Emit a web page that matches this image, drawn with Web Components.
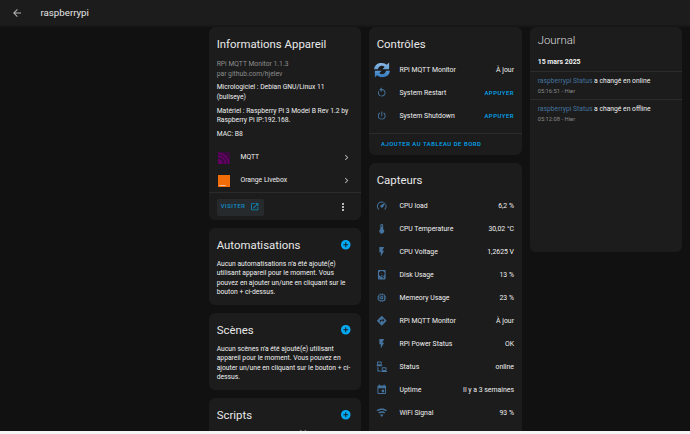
<!DOCTYPE html>
<html lang="fr"><head><meta charset="utf-8"><title>raspberrypi</title>
<style>
html,body{margin:0;height:100%;overflow:hidden;background:#f4f4f4;color:#f0f0f0;font-family:Roboto,"Liberation Sans",sans-serif}
</style></head><body>
<ha-topbar>raspberrypi</ha-topbar>
<ha-layout>
 <ha-column>
  <ha-card heading="Informations Appareil" style="height:193px">
   <ha-device-info></ha-device-info>
  </ha-card>
  <ha-card heading="Automatisations" add style="height:77px"><ha-note>Aucun automatisations n'a été ajouté(e) utilisant appareil pour le moment. Vous pouvez en ajouter un/une en cliquant sur le bouton + ci-dessus.</ha-note></ha-card>
  <ha-card heading="Scènes" add style="height:77px"><ha-note>Aucun scènes n'a été ajouté(e) utilisant appareil pour le moment. Vous pouvez en ajouter un/une en cliquant sur le bouton + ci-dessus.</ha-note></ha-card>
  <ha-card heading="Scripts" add><ha-note>Aucun scripts n'a été ajouté(e) utilisant appareil pour le moment.</ha-note></ha-card>
 </ha-column>
 <ha-column>
  <ha-card heading="Contrôles" style="height:128px">
   <ha-row icon="sync" label="RPi MQTT Monitor" value="À jour"></ha-row>
   <ha-row icon="restart" label="System Restart" action="APPUYER"></ha-row>
   <ha-row icon="power" label="System Shutdown" action="APPUYER"></ha-row>
   <ha-addbar>AJOUTER AU TABLEAU DE BORD</ha-addbar>
  </ha-card>
  <ha-card heading="Capteurs" style="height:285px">
   <ha-row icon="speed" label="CPU load" value="6,2 %"></ha-row>
   <ha-row icon="thermo" label="CPU Temperature" value="30,02 °C"></ha-row>
   <ha-row icon="flash" label="CPU Voltage" value="1,2625 V"></ha-row>
   <ha-row icon="disk" label="Disk Usage" value="13 %"></ha-row>
   <ha-row icon="memory" label="Memeory Usage" value="23 %"></ha-row>
   <ha-row icon="dir" label="RPi MQTT Monitor" value="À jour"></ha-row>
   <ha-row icon="flash" label="RPi Power Status" value="OK"></ha-row>
   <ha-row icon="lan" label="Status" value="online"></ha-row>
   <ha-row icon="cal" label="Uptime" value="Il y a 3 semaines"></ha-row>
   <ha-row icon="wifi" label="WiFi Signal" value="93 %"></ha-row>
  </ha-card>
 </ha-column>
 <ha-column>
  <ha-card heading="Journal" light style="height:225px">
   <ha-log date="15 mars 2025"></ha-log>
   <ha-log-entry state="online" time="05:16:51 - Hier"></ha-log-entry>
   <ha-log-entry state="offline" time="05:12:08 - Hier"></ha-log-entry>
  </ha-card>
 </ha-column>
</ha-layout>
<script>
const P={
restart:'M12,4C14.1,4 16.1,4.8 17.6,6.3C20.7,9.4 20.7,14.5 17.6,17.6C15.8,19.5 13.3,20.2 10.9,19.9L11.4,17.9C13.1,18.1 14.9,17.5 16.2,16.2C18.5,13.9 18.5,10.1 16.2,7.7C15.1,6.6 13.5,6 12,6V10.6L7,5.6L12,0.6V4M6.3,17.6C3.7,15 3.3,11 5.1,7.9L6.6,9.4C5.5,11.6 5.9,14.4 7.8,16.2C8.3,16.7 8.9,17.1 9.6,17.4L9,19.4C8,19 7.1,18.4 6.3,17.6Z',
power:'M16.56,5.44L15.11,6.89C16.84,7.94 18,9.83 18,12A6,6 0 0,1 12,18A6,6 0 0,1 6,12C6,9.83 7.16,7.94 8.88,6.88L7.44,5.44C5.36,6.88 4,9.28 4,12A8,8 0 0,0 12,20A8,8 0 0,0 20,12C20,9.28 18.64,6.88 16.56,5.44M13,3H11V13H13',
speed:'M12,16A3,3 0 0,1 9,13C9,11.88 9.61,10.9 10.5,10.39L20.21,4.77L14.68,14.35C14.18,15.33 13.17,16 12,16M12,3C13.81,3 15.5,3.5 16.97,4.32L14.87,5.53C14,5.19 13,5 12,5A8,8 0 0,0 4,13C4,15.21 4.89,17.21 6.34,18.65H6.35C6.74,19.04 6.74,19.67 6.35,20.06C5.96,20.45 5.32,20.45 4.93,20.07C3.12,18.26 2,15.76 2,13A10,10 0 0,1 12,3M22,13C22,15.76 20.88,18.26 19.07,20.07C18.68,20.45 18.05,20.45 17.66,20.06C17.27,19.67 17.27,19.04 17.66,18.65C19.11,17.2 20,15.21 20,13C20,12 19.81,11 19.46,10.1L20.67,8C21.5,9.5 22,11.18 22,13Z',
thermo:'M15 13V5A3 3 0 0 0 9 5V13A5 5 0 1 0 15 13M12 4A1 1 0 0 1 13 5V8H11V5A1 1 0 0 1 12 4Z',
flash:'M7,2V13H10V22L17,10H13L17,2H7Z',
disk:'M6,2H18A2,2 0 0,1 20,4V20A2,2 0 0,1 18,22H6A2,2 0 0,1 4,20V4A2,2 0 0,1 6,2M12,4A6,6 0 0,0 6,10C6,13.31 8.69,16 12.1,16L11.22,13.77C10.95,13.29 11.11,12.68 11.59,12.4L12.45,11.9C12.93,11.63 13.54,11.79 13.82,12.27L15.74,14.69C17.12,13.59 18,11.9 18,10A6,6 0 0,0 12,4M12,9A1,1 0 0,1 13,10A1,1 0 0,1 12,11A1,1 0 0,1 11,10A1,1 0 0,1 12,9M7,18A1,1 0 0,0 6,19A1,1 0 0,0 7,20A1,1 0 0,0 8,19A1,1 0 0,0 7,18M12.09,13.27L14.58,19.58L17.17,18.08L12.95,12.77L12.09,13.27Z',
memory:'M17,17H7V7H17M21,11V9H19V7C19,5.89 18.1,5 17,5H15V3H13V5H11V3H9V5H7C5.89,5 5,5.89 5,7V9H3V11H5V13H3V15H5V17A2,2 0 0,0 7,19H9V21H11V19H13V21H15V19H17A2,2 0 0,0 19,17V15H21V13H19V11M13,13H11V11H13M15,9H9V15H15V9Z',
dir:'M14,14.5V12H10V15H8V11A1,1 0 0,1 9,10H14V7.5L17.5,11M21.71,11.29L12.71,2.29H12.7C12.31,1.9 11.68,1.9 11.29,2.29L2.29,11.29C1.9,11.68 1.9,12.32 2.29,12.71L11.29,21.71C11.68,22.09 12.31,22.1 12.71,21.71L21.71,12.71C22.1,12.32 22.1,11.68 21.71,11.29Z',
lan:'M4,1C2.89,1 2,1.89 2,3V7C2,8.11 2.89,9 4,9H1V11H13V9H10C11.11,9 12,8.11 12,7V3C12,1.89 11.11,1 10,1H4M4,3H10V7H4V3M3,13V22H10V20H5V13H3M14,13C12.89,13 12,13.89 12,15V19C12,20.11 12.89,21 14,21H11V23H23V21H20C21.11,21 22,20.11 22,19V15C22,13.89 21.11,13 20,13H14M14,15H20V19H14V15Z',
cal:'M19,3H18V1H16V3H8V1H6V3H5C3.89,3 3,3.89 3,5V19A2,2 0 0,0 5,21H19A2,2 0 0,0 21,19V5A2,2 0 0,0 19,3M19,19H5V9H19V19M12,12H17V17H12V12Z',
wifi:'M12,21L15.6,16.2C14.6,15.45 13.35,15 12,15C10.65,15 9.4,15.45 8.4,16.2L12,21M12,3C7.95,3 4.21,4.34 1.2,6.6L3,9C5.5,7.12 8.62,6 12,6C15.38,6 18.5,7.12 21,9L22.8,6.6C19.79,4.34 16.05,3 12,3M12,9C9.3,9 6.81,9.89 4.8,11.4L6.6,13.8C8.1,12.67 9.97,12 12,12C14.03,12 15.9,12.67 17.4,13.8L19.2,11.4C17.19,9.89 14.7,9 12,9Z',
back:'M20,11V13H8L13.5,18.5L12.08,19.92L4.16,12L12.08,4.08L13.5,5.5L8,11H20Z',
chev:'M8.59,16.58L13.17,12L8.59,7.41L10,6L16,12L10,18L8.59,16.58Z',
plus:'M17,13H13V17H11V13H7V11H11V7H13V11H17M12,2A10,10 0 0,0 2,12A10,10 0 0,0 12,22A10,10 0 0,0 22,12A10,10 0 0,0 12,2Z',
open:'M14,3V5H17.59L7.76,14.83L9.17,16.24L19,6.41V10H21V3M19,19H5V5H12V3H5C3.89,3 3,3.9 3,5V19A2,2 0 0,0 5,21H19A2,2 0 0,0 21,19V12H19V19Z',
dots:'M12,16A2,2 0 0,1 14,18A2,2 0 0,1 12,20A2,2 0 0,1 10,18A2,2 0 0,1 12,16M12,10A2,2 0 0,1 14,12A2,2 0 0,1 12,14A2,2 0 0,1 10,12A2,2 0 0,1 12,10M12,4A2,2 0 0,1 14,6A2,2 0 0,1 12,8A2,2 0 0,1 10,6A2,2 0 0,1 12,4Z'
};
const ico=(n,s,c)=>`<svg width="${s}" height="${s}" viewBox="0 0 24 24" fill="${c}" style="display:block;flex:none"><path d="${P[n]}"/></svg>`;
const syncIcon=`<svg width="18" height="18" viewBox="0 0 24 24" style="display:block;flex:none"><defs><linearGradient id="g" x1="0" y1="0" x2="0" y2="1"><stop offset="0" stop-color="#8fbce6"/><stop offset="1" stop-color="#2f78bd"/></linearGradient></defs><path fill="url(#g)" d="M1.5 11C2 5 6.5 2.5 11.5 2.5c3 0 5.4 1 7 2.6L21.5 2v9h-9l3-3C14.6 7 13.4 6.4 11.7 6.4c-2.6 0-4.6 1.8-5 4.6zM22.5 13c-.5 6-5 8.5-10 8.5-3 0-5.4-1-7-2.6L2.5 22v-9h9l-3 3c.9 1 2.1 1.6 3.8 1.6 2.6 0 4.6-1.8 5-4.6z"/></svg>`;
function def(name,css,html){
 customElements.define(name,class extends HTMLElement{
  connectedCallback(){
   if(this.shadowRoot)return;
   const r=this.attachShadow({mode:'open'});
   r.innerHTML=`<style>${css}</style>`+(typeof html==='function'?html(this):html);
  }
 });
}
def('ha-topbar',`:host{display:flex;align-items:center;box-sizing:border-box;height:27px;background:#1c1c1c;border-bottom:2px solid #171717;padding-left:11px;color:#e6e6e6}
 .t{font-size:9.7px;margin-left:17.5px;line-height:12px}`,
 `${ico('back',12,'#b5b5b5')}<span class="t"><slot></slot></span>`);
def('ha-layout',`:host{display:grid;grid-template-columns:152px 153px 152px;column-gap:8px;justify-content:start;padding-left:209px;height:404px;overflow:hidden;align-items:start;background:#111}`,`<slot></slot>`);
def('ha-column',`:host{display:flex;flex-direction:column;gap:8px;min-width:0}`,`<slot></slot>`);
def('ha-card',`:host{display:block;box-sizing:border-box;background:#1c1c1c;border-radius:6px;overflow:hidden;flex:none}
 .h{display:flex;justify-content:space-between;align-items:center;padding:9px 10px 0 7.7px;height:16px;font-size:11.4px;line-height:16px;color:#e8e8e8}
 .body{padding-top:6.5px}
 :host([light]) .h{font-weight:300;color:#dcdcdc;padding-top:5px}
 :host([light]) .body{padding-top:4.5px}`,
 h=>`<div class="h"><span>${h.getAttribute('heading')}</span>${h.hasAttribute('add')?ico('plus',11.5,'#03a9f4'):''}</div><div class="body"><slot></slot></div>`);
def('ha-note',`:host{display:block;font-size:6.75px;line-height:9.6px;padding:0 7.7px;color:#f0f0f0}`,`<slot></slot>`);
def('ha-row',`:host{display:flex;align-items:center;height:23px;padding:0 8px 0 4px;font-size:6.9px;color:#f0f0f0}
 .i{width:18px;display:flex;justify-content:center;margin-right:8.5px}
 .l{flex:1;white-space:nowrap}
 .a{color:#03a9f4;font-size:5.9px;font-weight:500;letter-spacing:.52px}`,
 h=>{const n=h.getAttribute('icon');const a=h.getAttribute('action');
  return `<span class="i">${n==='sync'?syncIcon:ico(n,11.5,'#44739e')}</span><span class="l">${h.getAttribute('label')}</span>`+
  (a?`<span class="a">${a}</span>`:`<span>${h.getAttribute('value')}</span>`);});
def('ha-addbar',`:host{display:block;border-top:1px solid #2b2b2b;margin-top:5px;padding:6px 12px;font-size:5.9px;line-height:9px;font-weight:500;letter-spacing:.52px;color:#03a9f4}`,`<slot></slot>`);
def('ha-log',`:host{display:block;padding:3.5px 7.7px 0;height:15px;font-size:6.9px;line-height:12px;font-weight:700;color:#f0f0f0;border-bottom:1px solid #2b2b2b}`,h=>h.getAttribute('date'));
def('ha-log-entry',`:host{display:block;border-bottom:1px solid #2b2b2b;padding:3.5px 7.7px 0;height:23.5px;font-size:6.75px;line-height:10px;color:#f0f0f0}
 :host(:last-of-type){border-bottom:none}
 b{font-weight:400;color:#44739e}
 div{font-size:5.8px;color:#8a8a8a;line-height:10px}`,
 h=>`<b>raspberrypi Status</b> a changé en ${h.getAttribute('state')}<div>${h.getAttribute('time')}</div>`);
def('ha-device-row',`:host{display:flex;align-items:center;height:23px;padding:0 9px 0 9px;font-size:6.8px;color:#f0f0f0}
 .l{flex:1;margin-left:10.5px}`,
 h=>`<slot name="logo"></slot><span class="l">${h.getAttribute('label')}</span>${ico('chev',11,'#b0b0b0')}`);
def('ha-mqtt-logo',`:host{display:block;width:12px;height:12px;flex:none}`,`<svg width="12" height="12" viewBox="0 0 12 12" style="display:block"><rect width="12" height="12" fill="#3a0a3e"/><g fill="none" stroke="#660066" stroke-width="1.6"><path d="M0 1.2A10.8 10.8 0 0 1 10.8 12"/><path d="M0 4.4A7.6 7.6 0 0 1 7.6 12"/></g><path d="M0 7A5 5 0 0 1 5 12H0Z" fill="#660066"/></svg>`);
def('ha-orange-logo',`:host{display:flex;align-items:flex-end;box-sizing:border-box;width:12px;height:12px;flex:none;background:#f26c07;font:700 2px/2px Roboto,sans-serif;color:#fff;padding:0 0 .5px 1.5px}`,`orange`);
def('ha-device-info',`:host{display:block;font-size:6.75px;line-height:9.75px;color:#f0f0f0}
 .p{padding:0 7.7px;display:block}
 .g{color:#8c8c8c;margin:1.5px 0 3.75px}
 .m{margin-bottom:3.75px}
 .foot{margin-top:0;border-top:1px solid #2b2b2b;display:flex;justify-content:space-between;align-items:center;padding:5.5px 12px 5.5px 7.7px;height:17px}
 .btn{display:flex;align-items:center;gap:4.5px;background:#272a2c;border-radius:2px;height:17px;padding:0 4px;color:#0d8fc8;font-size:5.9px;font-weight:500;letter-spacing:.52px}`,
 `<div class="p g">RPi MQTT Monitor 1.1.3<br>par github.com/hjelev</div>
 <div class="p m">Micrologiciel : Debian GNU/Linux 11 (bullseye)</div>
 <div class="p m">Matériel : Raspberry Pi 3 Model B Rev 1.2 by Raspberry Pi IP:192.168.</div>
 <div class="p m" style="margin-bottom:6.5px">MAC: B8</div>
 <ha-device-row label="MQTT"><ha-mqtt-logo slot="logo"></ha-mqtt-logo></ha-device-row>
 <ha-device-row label="Orange Livebox"><ha-orange-logo slot="logo"></ha-orange-logo></ha-device-row>
 <div class="foot"><span class="btn">VISITER ${ico('open',9.5,'#0d8fc8')}</span>${ico('dots',12,'#eee')}</div>`);
</script>
</body></html>
